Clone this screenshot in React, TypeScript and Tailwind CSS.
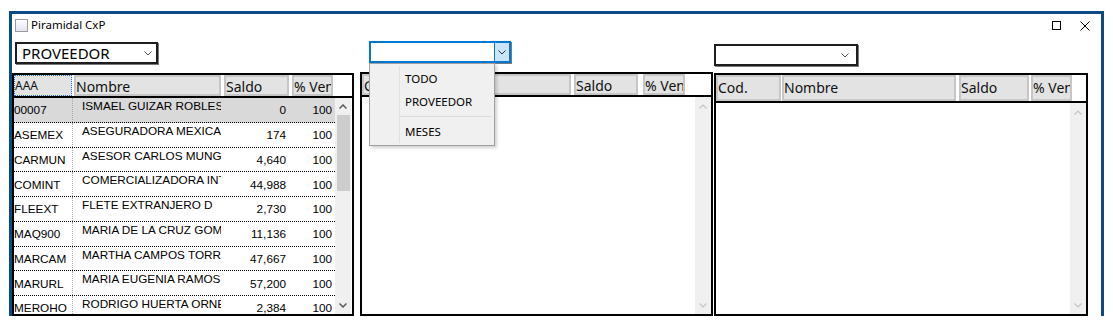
import React from "react";

const Chev = ({ up = false, color = "#606060", sw = 1.2 }: { up?: boolean; color?: string; sw?: number }) => (
  <svg width="8" height="5" viewBox="0 0 8 5">
    <polyline
      points={up ? "0.5,4.5 4,1 7.5,4.5" : "0.5,0.5 4,4 7.5,0.5"}
      fill="none"
      stroke={color}
      strokeWidth={sw}
    />
  </svg>
);

const rows: string[][] = [
  ["00007", "ISMAEL GUIZAR ROBLES", "0", "100"],
  ["ASEMEX", "ASEGURADORA MEXICA", "174", "100"],
  ["CARMUN", "ASESOR CARLOS MUNGUIA", "4,640", "100"],
  ["COMINT", "COMERCIALIZADORA INTERNACIONAL", "44,988", "100"],
  ["FLEEXT", "FLETE EXTRANJERO D", "2,730", "100"],
  ["MAQ900", "MARIA DE LA CRUZ GOMEZ", "11,136", "100"],
  ["MARCAM", "MARTHA CAMPOS TORRES", "47,667", "100"],
  ["MARURL", "MARIA EUGENIA RAMOS", "57,200", "100"],
  ["MEROHO", "RODRIGO HUERTA ORNELAS", "2,384", "100"],
];

const hcell =
  "h-full shrink-0 border-2 border-[#c6c6c6] bg-[#e3e3e3] text-[14px] leading-[18px] pt-[1px] overflow-hidden whitespace-nowrap text-[#111]";

function DisabledScroll() {
  return (
    <div className="w-[16px] shrink-0 bg-[#f0f0f0] flex flex-col items-center">
      <div className="h-[19px] flex items-center justify-center">
        <Chev up color="#c4c4c4" />
      </div>
      <div className="flex-1" />
      <div className="h-[17px] flex items-center justify-center">
        <Chev color="#c4c4c4" />
      </div>
    </div>
  );
}

export default function App() {
  return (
    <div className="w-[1113px] h-[324px] bg-white overflow-hidden font-['Noto_Sans',sans-serif] text-black">
      <div className="ml-[9px] mt-[11px] w-[1095px] h-[305px] border-t-[3px] border-x-[3px] border-[#0b4a85] flex flex-col">
        {/* title bar */}
        <div className="h-[26px] shrink-0 flex items-start">
          <div className="ml-[3px] mt-[5px] w-[13px] h-[13px] border border-[#9a9a9a] bg-gradient-to-b from-white to-[#e4e4f2]" />
          <span className="ml-[3px] mt-[3px] text-[11.5px] leading-[16px]">Piramidal CxP</span>
          <div className="ml-auto mt-[7px] w-[9px] h-[9px] border border-black" />
          <svg className="ml-[19px] mt-[7px]" width="10" height="10" viewBox="0 0 10 10">
            <path d="M0.5 0.5 L9.5 9.5 M9.5 0.5 L0.5 9.5" stroke="#000" strokeWidth="1" fill="none" />
          </svg>
          <div className="w-[11px] shrink-0" />
        </div>

        <div className="flex flex-1 min-h-0">
          {/* column 1 */}
          <div className="w-[342px] shrink-0 flex flex-col">
            <div className="ml-[3px] mt-[2px] mb-[9px] w-[143px] h-[22px] shrink-0 border-2 border-[#1e1e1e] shadow-[1px_1px_0_#7a7a7a] bg-white flex items-center pl-[5px] pr-[4px]">
              <span className="text-[15px] leading-[18px]">PROVEEDOR</span>
              <span className="ml-auto flex">
                <Chev color="#505050" sw={1} />
              </span>
            </div>
            <div className="flex-1 min-h-0 border-2 border-black flex flex-col overflow-hidden bg-white">
              <div className="h-[23px] shrink-0 border-b-2 border-black flex">
                <div className="w-[58px] h-full shrink-0 border border-dotted border-[#2a6fd6] bg-[#e3e3e3] text-[12px] leading-[14px] pt-[3px] text-[#111]">
                  AAA
                </div>
                <div className={`${hcell} ml-[2px] w-[147px]`}>Nombre</div>
                <div className={`${hcell} ml-[3px] w-[65px]`}>Saldo</div>
                <div className={`${hcell} ml-[3px] w-[41px]`}>% Ven</div>
              </div>
              <div className="flex flex-1 min-h-0">
                <div className="w-[321px] shrink-0 flex flex-col font-['Liberation_Sans',Arial,sans-serif] text-[11.75px] leading-[14px]">
                  {rows.map((r, i) => (
                    <div
                      key={r[0]}
                      className={
                        i === 0
                          ? "h-[24.75px] shrink-0 flex border-b border-dotted border-black bg-[#d9d9d9]"
                          : "h-[24.75px] shrink-0 flex border-b border-dotted border-black"
                      }
                    >
                      <div className="w-[59px] shrink-0 flex items-center pt-[1px] border-r border-dotted border-[#a8a8a8] whitespace-nowrap overflow-hidden">
                        {r[0]}
                      </div>
                      <div className="w-[148px] shrink-0 pl-[9px] pt-[1px] whitespace-nowrap overflow-hidden">
                        {r[1]}
                      </div>
                      <div className="w-[68px] shrink-0 flex items-center justify-end pt-[1px] pr-[3px]">{r[2]}</div>
                      <div className="w-[46px] shrink-0 flex items-center justify-end pt-[1px] pr-[3px]">{r[3]}</div>
                    </div>
                  ))}
                </div>
                <div className="w-[16px] shrink-0 bg-[#f0f0f0] flex flex-col items-center">
                  <div className="h-[17px] shrink-0 flex items-center justify-center">
                    <Chev up color="#5a5a5a" sw={1.5} />
                  </div>
                  <div className="w-[13px] h-[76px] shrink-0 bg-[#cdcdcd]" />
                  <div className="flex-1" />
                  <div className="h-[17px] shrink-0 flex items-center justify-center">
                    <Chev color="#5a5a5a" sw={1.5} />
                  </div>
                </div>
              </div>
            </div>
          </div>

          {/* column 2 */}
          <div className="ml-[6px] w-[353px] shrink-0 flex flex-col">
            <div className="relative ml-[9px] mt-[1px] mb-[9px] w-[142px] h-[22px] shrink-0 z-10">
              <div className="w-full h-full border-2 border-[#0078d7] shadow-[1px_1px_0_#7a7a7a] bg-white flex">
                <div className="flex-1" />
                <div className="w-[15px] h-full bg-[#cce4f7] border-l border-[#0078d7] flex items-center justify-center">
                  <Chev color="#333" sw={1} />
                </div>
              </div>
              <div className="absolute left-0 top-[22px] w-[126px] h-[83px] bg-[#f0f0f0] border border-[#a0a0a0] shadow-[2px_2px_3px_rgba(0,0,0,0.18)] flex flex-col text-[11.5px] leading-[16px]">
                <div className="absolute left-[29px] top-[2px] bottom-[2px] w-px bg-[#e0e0e0]" />
                <div className="h-[23px] mt-[3px] pl-[35px] flex items-center">TODO</div>
                <div className="h-[23px] pl-[35px] flex items-center">PROVEEDOR</div>
                <div className="ml-[30px] mr-[2px] my-[3px] h-px bg-[#dadada]" />
                <div className="h-[23px] pl-[35px] flex items-center">MESES</div>
              </div>
            </div>
            <div className="flex-1 min-h-0 border-2 border-black flex flex-col overflow-hidden bg-white">
              <div className="h-[23px] shrink-0 border-b-2 border-black flex">
                <div className={`${hcell} w-[64px]`}>Cod.</div>
                <div className={`${hcell} ml-[2px] w-[143px]`}>Nombre</div>
                <div className={`${hcell} ml-[3px] w-[64px]`}>Saldo</div>
                <div className={`${hcell} ml-[5px] w-[42px]`}>% Ven</div>
              </div>
              <div className="flex flex-1 min-h-0">
                <div className="flex-1" />
                <DisabledScroll />
              </div>
            </div>
          </div>

          {/* column 3 */}
          <div className="ml-[1px] w-[374px] shrink-0 flex flex-col">
            <div className="mt-[4px] mb-[7px] w-[144px] h-[22px] shrink-0 border-2 border-[#1e1e1e] shadow-[1px_1px_0_#7a7a7a] bg-white flex items-center justify-end pr-[7px]">
              <Chev color="#505050" sw={1} />
            </div>
            <div className="flex-1 min-h-0 border-2 border-black flex flex-col overflow-hidden bg-white">
              <div className="h-[28px] shrink-0 border-b-2 border-black flex">
                <div className={`${hcell} w-[65px] pt-[2px]`}>Cod.</div>
                <div className={`${hcell} ml-[1px] w-[174px] pt-[2px]`}>Nombre</div>
                <div className={`${hcell} ml-[3px] w-[70px] pt-[2px]`}>Saldo</div>
                <div className={`${hcell} ml-[2px] w-[41px] pt-[2px]`}>% Ven</div>
              </div>
              <div className="flex flex-1 min-h-0">
                <div className="flex-1" />
                <DisabledScroll />
              </div>
            </div>
          </div>
        </div>
      </div>
    </div>
  );
}
